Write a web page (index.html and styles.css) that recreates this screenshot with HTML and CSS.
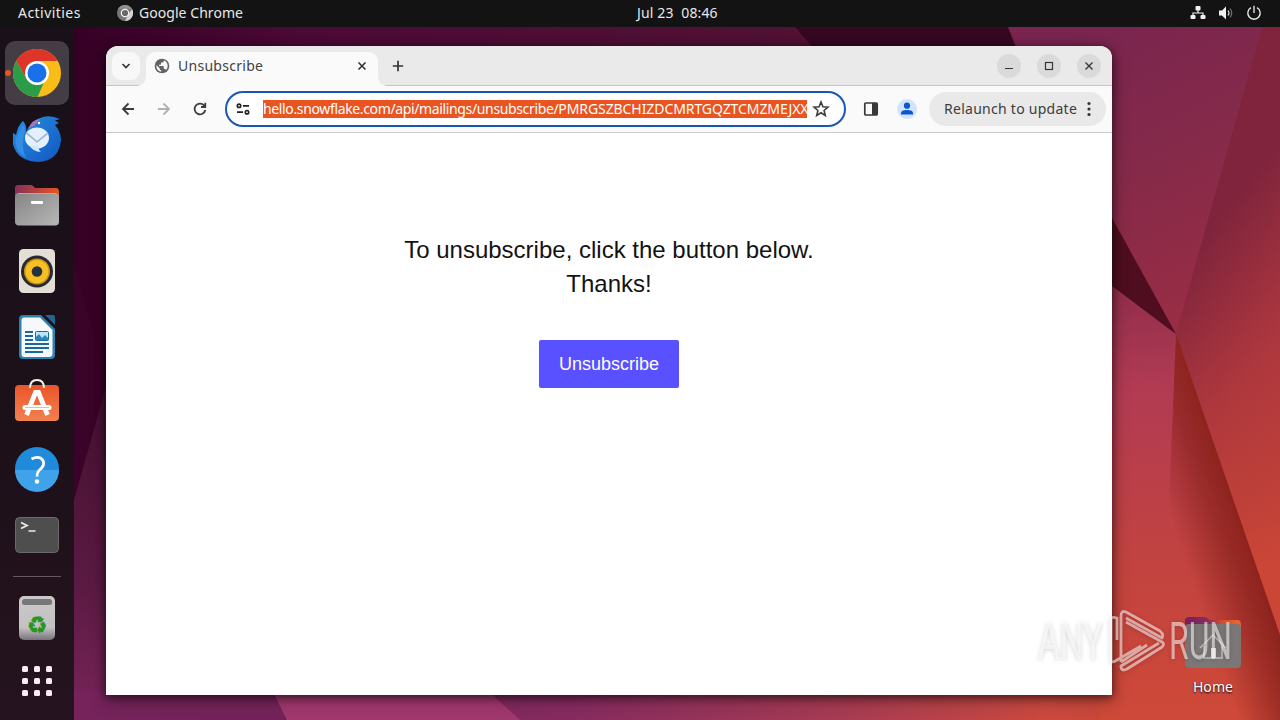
FILE: index.html
```html
<!DOCTYPE html>
<html lang="en">
<head>
<meta charset="utf-8">
<title>Unsubscribe</title>
<link rel="stylesheet" href="styles.css">
</head>
<body>
<div class="desktop">
<svg class="wallpaper" viewBox="0 0 1280 720" preserveAspectRatio="none" aria-hidden="true">
  <defs>
    <linearGradient id="top" x1="74" x2="1008" gradientUnits="userSpaceOnUse"><stop offset="0" stop-color="#360025"/><stop offset=".25" stop-color="#4c0a36"/><stop offset="1" stop-color="#521532"/></linearGradient>
    <linearGradient id="left" x1="0" y1="380" x2="0" y2="720" gradientUnits="userSpaceOnUse"><stop offset="0" stop-color="#43102f"/><stop offset=".6" stop-color="#5b1a42"/><stop offset="1" stop-color="#79255a"/></linearGradient>
    <linearGradient id="bottom" x1="74" x2="1180" gradientUnits="userSpaceOnUse"><stop offset="0" stop-color="#75235a"/><stop offset=".2" stop-color="#74235a"/><stop offset=".45" stop-color="#862b60"/><stop offset=".7" stop-color="#a83c52"/><stop offset=".88" stop-color="#cb493f"/><stop offset="1" stop-color="#c54535"/></linearGradient>
    <linearGradient id="upper" x1="1060" y1="40" x2="1200" y2="330" gradientUnits="userSpaceOnUse"><stop offset="0" stop-color="#79254f"/><stop offset=".5" stop-color="#862a49"/><stop offset="1" stop-color="#9b2d44"/></linearGradient>
    <linearGradient id="edge" x1="1200" y1="240" x2="1400" y2="400" gradientUnits="userSpaceOnUse"><stop offset="0" stop-color="#7f243c"/><stop offset=".5" stop-color="#b0383f"/><stop offset="1" stop-color="#c4413c"/></linearGradient>
    <linearGradient id="edge2" x1="1200" y1="300" x2="1290" y2="560" gradientUnits="userSpaceOnUse"><stop offset="0" stop-color="#a0323c" stop-opacity="0"/><stop offset="1" stop-color="#cb4636"/></linearGradient>
    <linearGradient id="face" x1="1130" y1="280" x2="1150" y2="720" gradientUnits="userSpaceOnUse"><stop offset="0" stop-color="#8e2c4b"/><stop offset=".25" stop-color="#b23b53"/><stop offset=".65" stop-color="#c2433f"/><stop offset="1" stop-color="#ce4938"/></linearGradient>
    <linearGradient id="fold" x1="1185" y1="560" x2="1262" y2="534" gradientUnits="userSpaceOnUse"><stop offset="0" stop-color="#8c231e" stop-opacity="0"/><stop offset=".5" stop-color="#8c231e" stop-opacity=".7"/><stop offset=".8" stop-color="#8e231d"/><stop offset="1" stop-color="#982518"/></linearGradient>
  </defs>
  <rect width="1280" height="720" fill="url(#top)"/>
  <path d="M795 27H1008L1016 50H815Z" fill="#360820"/>
  <path d="M74 265L108 385L74 500Z" fill="#3a0328"/>
  <path d="M74 500L108 380V720H74Z" fill="url(#left)"/>
  <path d="M74 690H1180V720H74Z" fill="url(#bottom)"/>
  <path d="M272 690H487L520 720H287Z" fill="#a1386e"/>
  <path d="M1008 27H1280V340H1176L1060 150Z" fill="url(#upper)"/>
  <path d="M1262 27H1280V635L1176 334Z" fill="url(#edge)"/>
  <path d="M1176 334L1262 27H1280V635Z" fill="url(#edge2)"/>
  <path d="M1100 276L1176 334L1280 635V720H1100Z" fill="url(#face)"/>
  <path d="M1176 334L1280 635V720H1160Z" fill="url(#fold)"/>
  <path d="M1100 196L1176 334L1100 277Z" fill="#4e0e20"/>
</svg>

<header class="topbar">
  <span class="activities">Activities</span>
  <span class="app">
    <svg width="16" height="16" viewBox="0 0 16 16"><circle cx="8" cy="8" r="8" fill="#777"/><path d="M1 4A8 8 0 0 1 15 4H8Z" fill="#8d8d8d"/><path d="M15 4A8 8 0 0 1 8 16L11 10Z" fill="#d2d2d2"/><circle cx="8" cy="8" r="3.700" fill="#686868" stroke="#f4f4f4" stroke-width="1.200"/></svg>
    <span class="app-name">Google Chrome</span>
  </span>
  <span class="clock">Jul 23&nbsp; 08:46</span>
  <span class="status">
    <svg width="16" height="16" viewBox="0 0 16 16" fill="#f2f2f2"><rect x="5.500" y="1" width="5" height="4.500" rx="1"/><path d="M8 5V8M3 10.500V8H13V10.500" fill="none" stroke="#f2f2f2" stroke-width="1.200"/><rect x=".5" y="10" width="5" height="4" rx="1"/><rect x="10.500" y="10" width="5" height="4" rx="1"/></svg>
    <svg width="16" height="16" viewBox="0 0 16 16"><path d="M1 5.500h3L8 1.500v13l-4-4H1z" fill="#f2f2f2"/><path d="M10 5.500q2 2.500 0 5" fill="none" stroke="#ddd" stroke-width="1.200"/><path d="M12 3.500q3.500 4.500 0 9" fill="none" stroke="#777" stroke-width="1.200"/></svg>
    <svg width="16" height="16" viewBox="0 0 16 16" fill="none" stroke="#eee" stroke-width="1.300"><path d="M5 2.600A6.200 6.200 0 1 0 11 2.600M8 .8V8"/></svg>
  </span>
</header>

<div class="workspace">
<nav class="dock">
  <div class="slot active"><svg viewBox="0 0 48 48"><circle cx="24" cy="24" r="24" fill="#f9bd17"/><path d="M3.200 12A24 24 0 0 1 44.800 12H24L13.600 30Z" fill="#df3529"/><path d="M3.200 12L13.600 30L24 36L30.500 34.500L24.500 48A24 24 0 0 1 3.200 12Z" fill="#2b9c48"/><circle cx="24" cy="24" r="12" fill="#fff"/><circle cx="24" cy="24" r="9.500" fill="#1a70e8"/></svg></div>
  <div class="slot"><svg viewBox="0 0 48 48"><defs><linearGradient id="bird" x2="1" y2="1"><stop stop-color="#2790e2"/><stop offset="1" stop-color="#1157c1"/></linearGradient></defs><path d="M0 18L3 20Q5 10 10 6Q14 10 13 17Q18 5 30 2Q38 0 47 4L42 5.500L46 8L42 10Q48 17 48 25Q46 46 25 47Q4 46 0 29Z" fill="url(#bird)"/><path d="M3 23Q1 36 13 43Q7 31 12 16L10 9Q8 15 3 23Z" fill="#348fe4"/><path d="M16 13Q18 5 27 4L21 11Z" fill="#9a79be"/><circle cx="26" cy="8" r="1.200" fill="#fff"/><ellipse cx="24" cy="23" rx="12" ry="10.500" fill="#e4f1fc"/><path d="M13.500 18L24 27L35 18" fill="none" stroke="#9fb9d4" stroke-width="1.700"/><path d="M16 30Q20 37 28 37Q26 36 25 31Z" fill="#d2e8fb"/></svg></div>
  <div class="slot"><svg viewBox="0 0 48 48"><defs><linearGradient id="folder"><stop stop-color="#872f5b"/><stop offset="1" stop-color="#e95420"/></linearGradient><linearGradient id="grey" x2="1" y2="1"><stop stop-color="#858585"/><stop offset="1" stop-color="#b7b7b7"/></linearGradient></defs><path d="M2 36V7Q2 4 5 4H18Q20 4 22 7H43Q46 7 46 11V36Z" fill="url(#folder)"/><rect x="2" y="12" width="44" height="32.500" rx="4" fill="url(#grey)"/><path d="M5 12.500H43" stroke="#aaa"/><rect x="18" y="20" width="12" height="3" rx="1" fill="#fff"/></svg></div>
  <div class="slot"><svg viewBox="0 0 48 48"><rect x="6" y="2" width="36" height="44" rx="4.500" fill="#e3dfd4"/><circle cx="24" cy="24.500" r="16" fill="#2b2833"/><circle cx="24" cy="24.500" r="13" fill="#c99612"/><circle cx="24" cy="24.500" r="11.500" fill="#f4c022"/><circle cx="24" cy="24.500" r="5.300" fill="#2f3036"/><circle cx="24" cy="24.500" r="2.500" fill="#18354c"/></svg></div>
  <div class="slot"><svg viewBox="0 0 48 48"><path d="M10 2H28L42 16V42Q42 46 38 46H10Q6 46 6 42V6Q6 2 10 2Z" fill="#2d81ae"/><path d="M11 4.500H27L39.500 17V41Q39.500 44 36 44H11Q8.500 44 8.500 41V7Q8.500 4.500 11 4.500Z" fill="#f5f9fc"/><path d="M32 2H40Q42 2 42 4V12Z" fill="#23658e"/><path d="M12 19H20M12 23H20M12 27H20M12 31H36M12 35H36M12 39H30" stroke="#176a99" stroke-width="1.800"/><rect x="22.500" y="18.500" width="13" height="9" rx="1" fill="#bfe4fa" stroke="#176a99"/><path d="M23 27V24L26 21L29 25L32 22L35 25V27Z" fill="#2988b9"/></svg></div>
  <div class="slot"><svg viewBox="0 0 48 48"><defs><linearGradient id="bag" x2="0" y2="1"><stop stop-color="#ea5529"/><stop offset="1" stop-color="#f1824f"/></linearGradient></defs><rect x="2" y="6" width="44" height="36" rx="4" fill="url(#bag)"/><path d="M17 9Q17 1 24 1T31 9" fill="none" stroke="#f7f0ed" stroke-width="2"/><path d="M13.500 36L22.500 13.500H25.500L34.500 36" fill="none" stroke="#fff" stroke-width="4.800"/><rect x="9.500" y="26" width="29" height="5" rx="2.500" fill="#fff"/><path d="M12 28.500H36" stroke="#ec9a78" stroke-width=".7"/></svg></div>
  <div class="slot"><svg viewBox="0 0 48 48"><circle cx="24" cy="24" r="22" fill="#218bdb"/><path d="M2 25A22 22 0 0 0 46 25Z" fill="#40a2e8"/><path d="M18.500 14Q23.500 11.500 27.500 13Q32 16 30 21Q29 23 26 25.500Q24 27.500 24 31.500" fill="none" stroke="#fff" stroke-width="2.800"/><circle cx="24" cy="36.500" r="2.200" fill="#fff"/></svg></div>
  <div class="slot"><svg viewBox="0 0 48 48"><rect x="2.500" y="6.500" width="43" height="35" rx="4" fill="#4e4e4e" stroke="#6b6b6b"/><path d="M8 11.500L14 14.500L8 17.500M15.500 20H22.500" fill="none" stroke="#eee" stroke-width="1.700"/></svg></div>
  <div class="divider"></div>
  <div class="slot"><svg viewBox="0 0 48 48"><defs><linearGradient id="bin" x2="0" y2="1"><stop stop-color="#cac8c9"/><stop offset=".72" stop-color="#c4c1c3"/><stop offset="1" stop-color="#77737a"/></linearGradient></defs><rect x="6" y="2" width="36" height="44" rx="5" fill="url(#bin)"/><rect x="9" y="5" width="30" height="6" rx="2.500" fill="#777"/><text class="recycle" x="24" y="38.500" text-anchor="middle">♻</text></svg></div>
  <div class="slot apps"><svg viewBox="0 0 48 48" fill="#f9edf6"><rect x="9" y="9" width="6" height="6" rx="1.500"/><rect x="21" y="9" width="6" height="6" rx="1.500"/><rect x="33" y="9" width="6" height="6" rx="1.500"/><rect x="9" y="21" width="6" height="6" rx="1.500"/><rect x="21" y="21" width="6" height="6" rx="1.500"/><rect x="33" y="21" width="6" height="6" rx="1.500"/><rect x="9" y="33" width="6" height="6" rx="1.500"/><rect x="21" y="33" width="6" height="6" rx="1.500"/><rect x="33" y="33" width="6" height="6" rx="1.500"/></svg></div>
</nav>

<main class="window">
  <div class="tabstrip">
    <button class="tab-search" aria-label="Search tabs"><svg width="12" height="12" viewBox="0 0 12 12"><path d="M2.500 4L6 7.500L9.500 4" fill="none" stroke="#333" stroke-width="1.700"/></svg></button>
    <div class="tab">
      <svg width="16" height="16" viewBox="0 0 16 16"><circle cx="8" cy="8" r="7.300" fill="#5f6266"/><path d="M9.800 2.300V3.300Q9.800 4.600 8.400 4.600H7V6Q7 6.700 6.300 6.700H5V8H9Q9.800 8 9.800 9V11H10.500Q11.700 11 12.100 12Q13.700 10.200 13.700 8Q13.500 4 9.800 2.300ZM2.400 7L5.700 10.300V11Q5.700 12.300 7.200 12.300V13.700Q2 12.700 2.400 7Z" fill="#fafafa"/></svg>
      <span class="tab-title">Unsubscribe</span>
      <svg width="12" height="12" viewBox="0 0 12 12"><path d="M2.500 2.500L9.500 9.500M9.500 2.500L2.500 9.500" stroke="#333" stroke-width="1.600"/></svg>
    </div>
    <svg class="newtab" width="12" height="12" viewBox="0 0 12 12"><path d="M6 .8V11.200M.8 6H11.200" stroke="#333" stroke-width="1.700"/></svg>
    <div class="controls">
      <span><svg width="24" height="24" viewBox="0 0 24 24"><path d="M8 14.500H16" stroke="#333"/></svg></span>
      <span><svg width="24" height="24" viewBox="0 0 24 24"><rect x="8.500" y="8.500" width="7" height="7" fill="none" stroke="#333" stroke-width="1.200"/></svg></span>
      <span><svg width="24" height="24" viewBox="0 0 24 24"><path d="M8.500 8.500L15.500 15.500M15.500 8.500L8.500 15.500" stroke="#333" stroke-width="1.300"/></svg></span>
    </div>
  </div>
  <div class="toolbar">
    <div class="navs">
      <svg width="16" height="16" viewBox="0 0 16 16" fill="none" stroke="#3c3c3c" stroke-width="1.800"><path d="M14 8H3M8.500 2.500L3 8L8.500 13.500"/></svg>
      <svg width="16" height="16" viewBox="0 0 16 16" fill="none" stroke="#b0b0b0" stroke-width="1.800"><path d="M2 8H13M7.500 2.500L13 8L7.500 13.500"/></svg>
      <svg width="16" height="16" viewBox="0 0 16 16" fill="none" stroke="#3c3c3c" stroke-width="1.800"><path d="M13.300 9A5.400 5.400 0 1 1 12 4.300L13 5.500M13.300 1.800V6H9"/></svg>
    </div>
    <div class="omnibox">
      <svg width="16" height="16" viewBox="0 0 16 16" fill="none" stroke="#222" stroke-width="1.700"><circle cx="4" cy="4.800" r="1.700"/><path d="M8 4.800H14M2 11.200H8"/><circle cx="12" cy="11.200" r="1.700"/></svg>
      <div class="url"><span>hello.snowflake.com/api/mailings/unsubscribe/</span><span class="token">PMRGSZBCHIZDCMRTGQZTCMZMEJXX</span></div>
      <svg width="18" height="18" viewBox="0 0 18 18"><path d="M9 2L10.900 6.800L16 7.200L12.100 10.500L13.300 15.500L9 12.800L4.700 15.500L5.900 10.500L2 7.200L7.100 6.800Z" fill="none" stroke="#3f3f3f" stroke-width="1.600"/></svg>
    </div>
    <svg class="panel" width="16" height="16" viewBox="0 0 16 16"><rect x="1.800" y="2" width="12.400" height="12" rx="1" fill="none" stroke="#393939" stroke-width="1.700"/><path d="M9 2H14V14H9Z" fill="#393939"/></svg>
    <svg class="profile" width="20" height="20" viewBox="0 0 20 20"><circle cx="10" cy="10" r="10" fill="#d3e3fd"/><circle cx="10" cy="6.700" r="3.100" fill="#0b57d0"/><path d="M4 15.500V14Q4 11 10 11T16 14V15.500Z" fill="#0b57d0"/></svg>
    <button class="relaunch"><span class="relaunch-label">Relaunch to update</span><svg width="6" height="18" viewBox="0 0 6 18" fill="#333"><circle cx="3" cy="3.500" r="1.600"/><circle cx="3" cy="9" r="1.600"/><circle cx="3" cy="14.500" r="1.600"/></svg></button>
  </div>
  <section class="page">
    <p class="message">To unsubscribe, click the button below.<br>Thanks!</p>
    <button class="unsubscribe">Unsubscribe</button>
  </section>
</main>

<div class="home">
  <svg width="56" height="52" viewBox="0 0 56 52"><defs><linearGradient id="hf"><stop stop-color="#74205a"/><stop offset=".4" stop-color="#87305e"/><stop offset=".7" stop-color="#df502c"/><stop offset="1" stop-color="#ed6a31"/></linearGradient></defs><path d="M0 40V4Q0 0 4 0H19Q22 0 25 3H52Q56 3 56 8V40Z" fill="url(#hf)"/><rect y="7" width="56" height="44" rx="4" fill="#7b7776"/><path d="M15 31L28 18L41 31M19 29V41H37V29" fill="none" stroke="#c2bebb" stroke-width="1.500"/><path d="M26 31H31V41H26Z" fill="#e3e1df"/></svg>
  <span class="home-label">Home</span>
</div>
</div>

<svg class="watermark" width="240" height="72" viewBox="1030 605 240 72">
  <g class="mark">
    <text x="1038" y="659" textLength="65" lengthAdjust="spacingAndGlyphs">ANY</text>
    <path d="M1117 617V640M1111 660V620Q1111 616 1117 618M1121 662V616Q1121 610 1126 612L1160 631Q1164 634 1162 638L1126 618M1126 622L1162 642Q1165 644 1162 647L1127 669Q1121 672 1121 666L1159 643M1121 662L1147 645M1111 659Q1111 664 1117 660L1141 646"/>
    <text x="1169" y="659" textLength="63" lengthAdjust="spacingAndGlyphs">RUN</text>
  </g>
</svg>
</div>
</body>
</html>
```
FILE: styles.css
```css
* { box-sizing: border-box; }
body { margin: 0; font-family: "Noto Sans", "Open Sans", sans-serif; }
svg { display: block; flex: none; }
button { border: 0; padding: 0; font: inherit; }
.desktop { position: relative; width: 1280px; height: 720px; overflow: hidden; display: flex; flex-direction: column; }
.wallpaper { position: absolute; inset: 0; width: 100%; height: 100%; }
.topbar { position: relative; height: 27px; flex: none; background: #131313; color: #e8e8e8; display: grid; grid-template-columns: 99px 500px 1fr 90px; align-items: center; padding: 0 0 1px 18px; font-size: 14px; line-height: 26px; white-space: nowrap; }
.app { display: flex; align-items: center; gap: 6px; }
.activities { letter-spacing: .45px; }
.app-name { letter-spacing: .05px; }
.clock { padding-left: 20px; letter-spacing: .15px; }
.status { display: flex; gap: 12px; }
.workspace { position: relative; flex: 1; display: flex; min-height: 0; }
.dock { width: 74px; flex: none; padding: 14px 5px 0; background: linear-gradient(#19101a, #1d1019 60%, #25141f); display: flex; flex-direction: column; gap: 2px; }
.slot { width: 64px; height: 64px; flex: none; display: grid; place-items: center; }
.slot svg { width: 48px; height: 48px; }
.active { position: relative; background: #453d45; border-radius: 10px; }
.active::before { content: ""; position: absolute; left: 0; top: 29px; width: 6px; height: 6px; border-radius: 50%; background: #e95420; }
.divider { width: 48px; height: 1px; flex: none; margin: 7px 8px; background: #655a62; }
.recycle { font-family: "DejaVu Sans", sans-serif; font-size: 23px; fill: #27951f; stroke: #27951f; stroke-width: .6px; }
.apps { margin-top: -3px; }
.window { width: 1006px; height: 649px; flex: none; margin: 19px 0 0 32px; background: #fff; border-radius: 12px 12px 0 0; box-shadow: 0 2px 8px 1px rgba(0,0,0,.5), 0 5px 18px rgba(0,0,0,.25); display: flex; flex-direction: column; }
.tabstrip { height: 40px; flex: none; display: flex; padding: 6px 11px 0 6px; background: #eaeaea; border-bottom: 1px solid #c5c5c5; border-radius: 12px 12px 0 0; }
.tab-search { width: 28px; height: 28px; border-radius: 9px; background: #f8f8f8; display: grid; place-items: center; }
.tab { position: relative; margin-left: 6px; width: 232px; height: 34px; background: #fafafa; border-radius: 9px 9px 0 0; display: flex; align-items: center; padding: 0 10px 6px 8px; gap: 8px; }
.tab::before, .tab::after { content: ""; position: absolute; bottom: 0; width: 9px; height: 9px; }
.tab::before { left: -9px; background: radial-gradient(circle at 0 0, transparent 8.5px, #fafafa 9px); }
.tab::after { right: -9px; background: radial-gradient(circle at 100% 0, transparent 8.5px, #fafafa 9px); }
.tab-title { flex: 1; font-size: 14px; letter-spacing: .28px; color: #424242; line-height: 28px; }
.newtab { margin: 8px 0 0 14px; }
.controls { margin-left: auto; display: flex; gap: 16px; padding-top: 2px; }
.controls span { width: 24px; height: 24px; border-radius: 50%; background: #dadada; }
.toolbar { height: 47px; flex: none; display: flex; align-items: center; background: #fafafa; border-bottom: 1px solid #c9c9c9; padding: 0 6px 0 14px; }
.navs { display: flex; gap: 20px; width: 105px; flex: none; }
.omnibox { width: 621px; height: 36px; border: 2px solid #1857b8; border-radius: 18px; background: #fff; display: flex; align-items: center; padding: 0 14px 0 8px; }
.url { width: 544px; margin: 0 5px 0 12px; height: 18px; overflow: hidden; background: #e95420; color: #fff; font-size: 14px; line-height: 18px; white-space: nowrap; letter-spacing: -.36px; }
.token { letter-spacing: -.08px; }
.panel { margin-left: 17px; }
.profile { margin-left: 18px; }
.relaunch { margin-left: 12px; width: 177px; height: 34px; border-radius: 17px; background: #e9e9e9; color: #3c3c3c; font-size: 14px; display: flex; align-items: center; padding: 0 14px 0 15px; justify-content: space-between; white-space: nowrap; }
.relaunch-label { letter-spacing: .27px; padding-bottom: 2px; }
.page { flex: 1; display: flex; flex-direction: column; align-items: center; padding-top: 100px; font-family: "Liberation Sans", sans-serif; }
.message { margin: 0; text-align: center; color: #121212; font-size: 24px; line-height: 34px; }
.unsubscribe { margin-top: 39px; width: 140px; height: 48px; border-radius: 2px; background: #5950ff; color: #fff; font-size: 18px; }
.home { margin: 590px 0 0 73px; width: 56px; display: flex; flex-direction: column; align-items: center; }
.home-label { color: #fff; font-size: 14px; line-height: 19px; margin-top: 8px; letter-spacing: .1px; text-shadow: 0 1px 2px #000; }
.watermark { position: absolute; left: 1030px; top: 605px; filter: drop-shadow(0 1px 2px rgba(0,0,0,.3)); }
.mark { font-family: Roboto, sans-serif; font-weight: 400; font-size: 52px; fill: #fff; opacity: .55; }
.mark path { fill: none; stroke: #fff; stroke-width: 2.8; stroke-linejoin: round; }
```
